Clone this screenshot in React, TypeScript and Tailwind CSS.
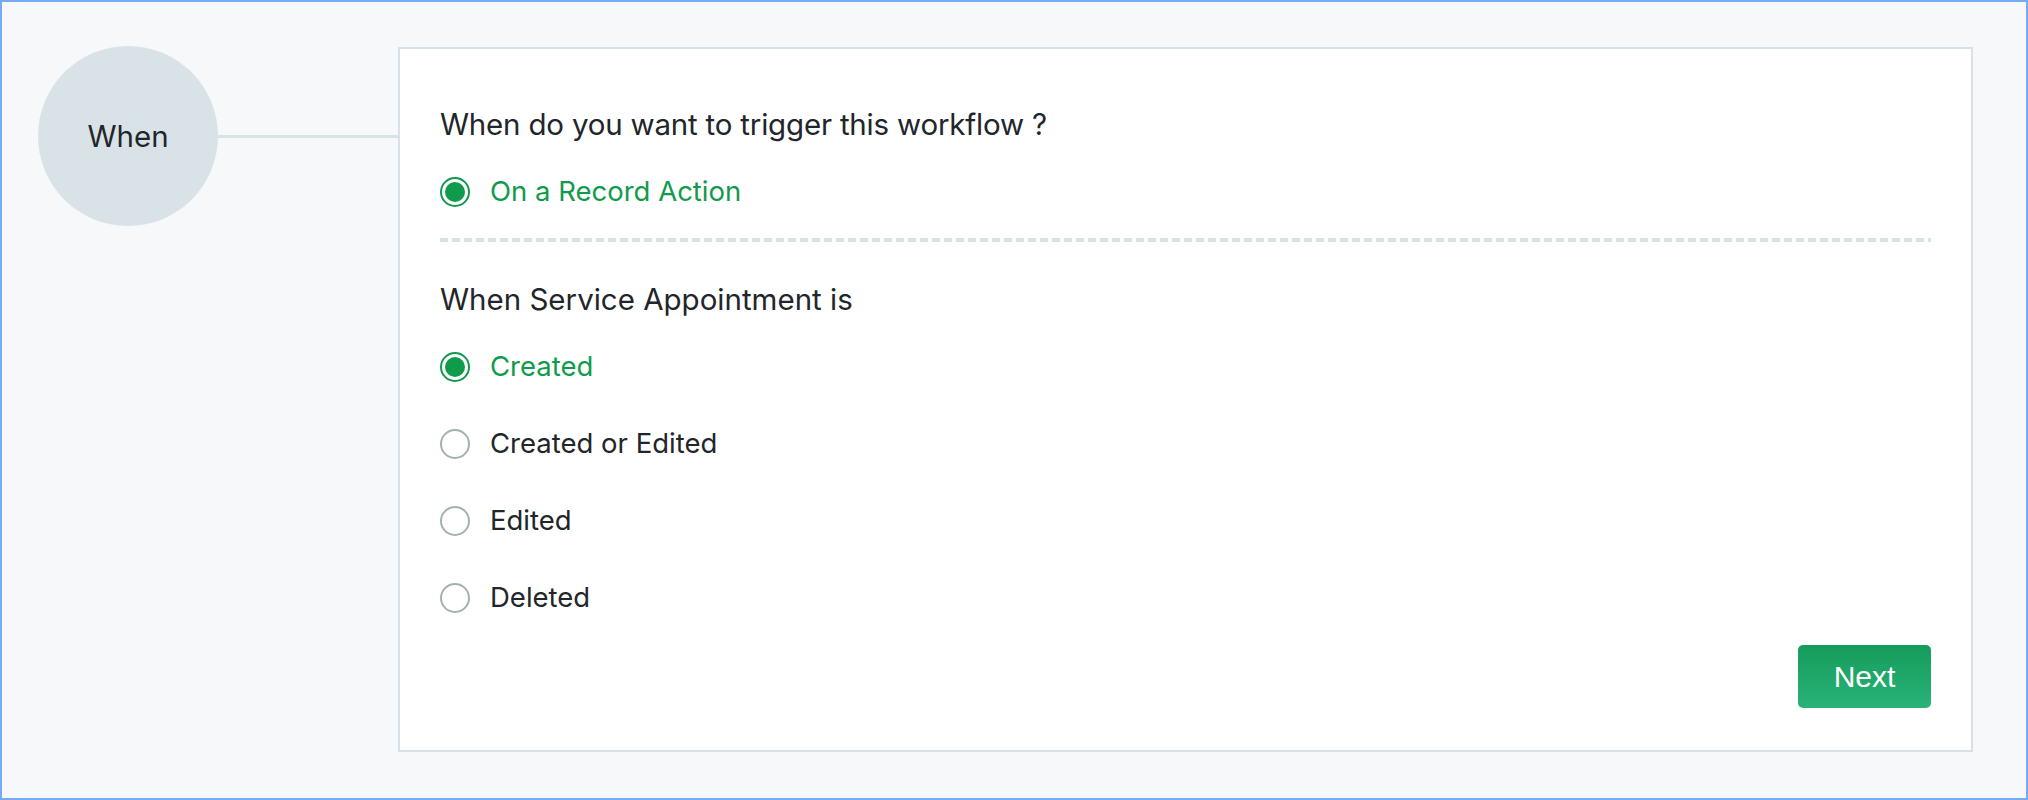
import React from "react";

const Radio = ({ checked }: { checked: boolean }) =>
  checked ? (
    <span className="flex h-[30px] w-[30px] shrink-0 items-center justify-center rounded-full border-2 border-[#109a4c] bg-white">
      <span className="h-[20px] w-[20px] rounded-full bg-[#109a4c]" />
    </span>
  ) : (
    <span className="h-[30px] w-[30px] shrink-0 rounded-full border-2 border-[#a3b2ae] bg-white" />
  );

const Option = ({ label, checked }: { label: string; checked: boolean }) => (
  <div className="flex h-[40px] items-center gap-[20px] text-[27.5px]">
    <Radio checked={checked} />
    <span className={checked ? "text-[#129a4c]" : "text-[#22262b]"}>{label}</span>
  </div>
);

export default function App() {
  return (
    <div
      className="box-border flex h-[800px] w-[2028px] items-start border-2 border-[#74adf5] bg-[#f6f8fa] pl-[36px] pr-[53px] pt-[44px] text-[29.5px] text-[#22262b]"
      style={{ fontFamily: "Inter, 'Noto Sans', sans-serif" }}
    >
      <div className="flex h-[180px] w-[180px] shrink-0 items-center justify-center rounded-full bg-[#d9e3e7] text-[#22262b]">
        When
      </div>
      <div className="mt-[89px] h-[3px] w-[180px] shrink-0 bg-[#d9e3e7]" />
      <div className="mt-px box-border flex h-[705px] flex-1 flex-col border-2 border-[#d8e1e7] bg-white pl-[40px] pr-[40px] pt-[57px] pb-[42px]">
        <div className="h-[36px] leading-[36px] tracking-[-0.2px]">When do you want to trigger this workflow ?</div>
        <div className="mt-[30px]">
          <Option label="On a Record Action" checked />
        </div>
        <div
          className="mt-[26px] h-[4px] w-full"
          style={{
            backgroundImage:
              "repeating-linear-gradient(to right, #d8e1e6 0, #d8e1e6 8px, transparent 8px, transparent 12px)",
          }}
        />
        <div className="mt-[39px] h-[36px] leading-[36px]">When Service Appointment is</div>
        <div className="mt-[30px] flex flex-col gap-[37px]">
          <Option label="Created" checked />
          <Option label="Created or Edited" checked={false} />
          <Option label="Edited" checked={false} />
          <Option label="Deleted" checked={false} />
        </div>
        <div className="mt-auto flex justify-end">
          <button
            className="h-[63px] w-[133px] rounded-[5px] bg-gradient-to-b from-[#159c5b] to-[#29b379] text-[30px] text-white"
            style={{ fontFamily: "'Liberation Sans', Arial, sans-serif" }}
          >
            Next
          </button>
        </div>
      </div>
    </div>
  );
}
